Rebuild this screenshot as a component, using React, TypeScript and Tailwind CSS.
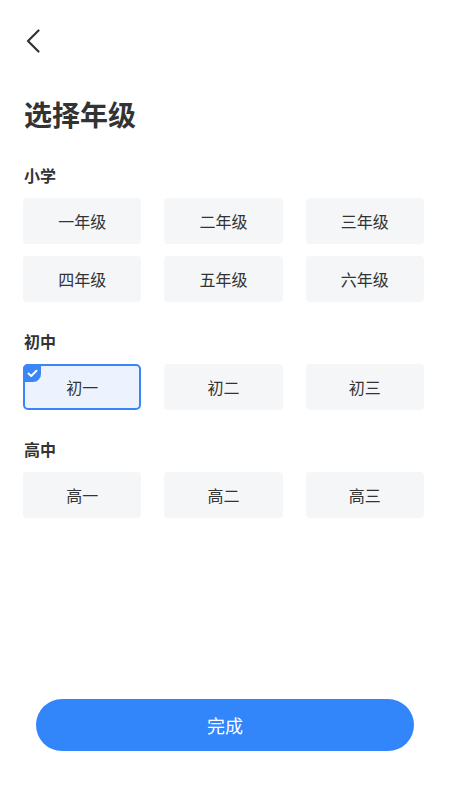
import { useState } from 'react';

const sections = [
  { title: '小学', grades: ['一年级', '二年级', '三年级', '四年级', '五年级', '六年级'] },
  { title: '初中', grades: ['初一', '初二', '初三'] },
  { title: '高中', grades: ['高一', '高二', '高三'] },
];

export default function App() {
  const [selected, setSelected] = useState('初一');

  return (
    <div
      className="flex min-h-[800px] flex-col bg-white text-[#333]"
      style={{ fontFamily: '"Noto Sans CJK SC", "Noto Sans", sans-serif' }}
    >
      <div className="pl-[11px] pt-[19px]">
        <button className="flex h-11 w-11 items-center justify-center">
          <svg width="14" height="24" viewBox="0 0 14 24" fill="none">
            <path d="M12.5 1.5L2 12l10.5 10.5" stroke="#333" strokeWidth="2.2" strokeLinecap="round" strokeLinejoin="round" />
          </svg>
        </button>
      </div>

      <h1 className="mt-[31px] px-6 text-[28px] font-bold leading-[40px]">选择年级</h1>

      <div className="mt-[29px] pl-[23px] pr-[26px]">
        {sections.map((s, i) => (
          <div key={s.title} className={i > 0 ? 'mt-[27px]' : ''}>
            <h2 className="mb-[11px] pl-px text-[16px] font-bold leading-6">{s.title}</h2>
            <div className="grid grid-cols-3 gap-x-[23px] gap-y-3">
              {s.grades.map((g) => {
                const active = g === selected;
                return (
                  <button
                    key={g}
                    onClick={() => setSelected(g)}
                    className={
                      active
                        ? 'relative h-[46px] rounded-[5px] border-2 border-[#3a86f7] bg-[#edf3fe] text-[16px] text-[#333]'
                        : 'relative h-[46px] rounded-[4px] bg-[#f4f6f8] text-[16px] text-[#333]'
                    }
                  >
                    {active && (
                      <span className="absolute -left-[2px] -top-[2px] flex h-[18px] w-[18px] items-center justify-center rounded-tl-[5px] rounded-br-[8px] bg-[#3a86f7]">
                        <svg width="11" height="9" viewBox="0 0 11 9" fill="none">
                          <path d="M1.5 4.5L4.2 7 9.5 1.8" stroke="#fff" strokeWidth="2" strokeLinecap="round" strokeLinejoin="round" />
                        </svg>
                      </span>
                    )}
                    {g}
                  </button>
                );
              })}
            </div>
          </div>
        ))}
      </div>

      <div className="mt-auto px-9 pb-[49px]">
        <button className="h-[52px] w-full rounded-full bg-[#3385fa] text-[18px] text-white">完成</button>
      </div>
    </div>
  );
}
